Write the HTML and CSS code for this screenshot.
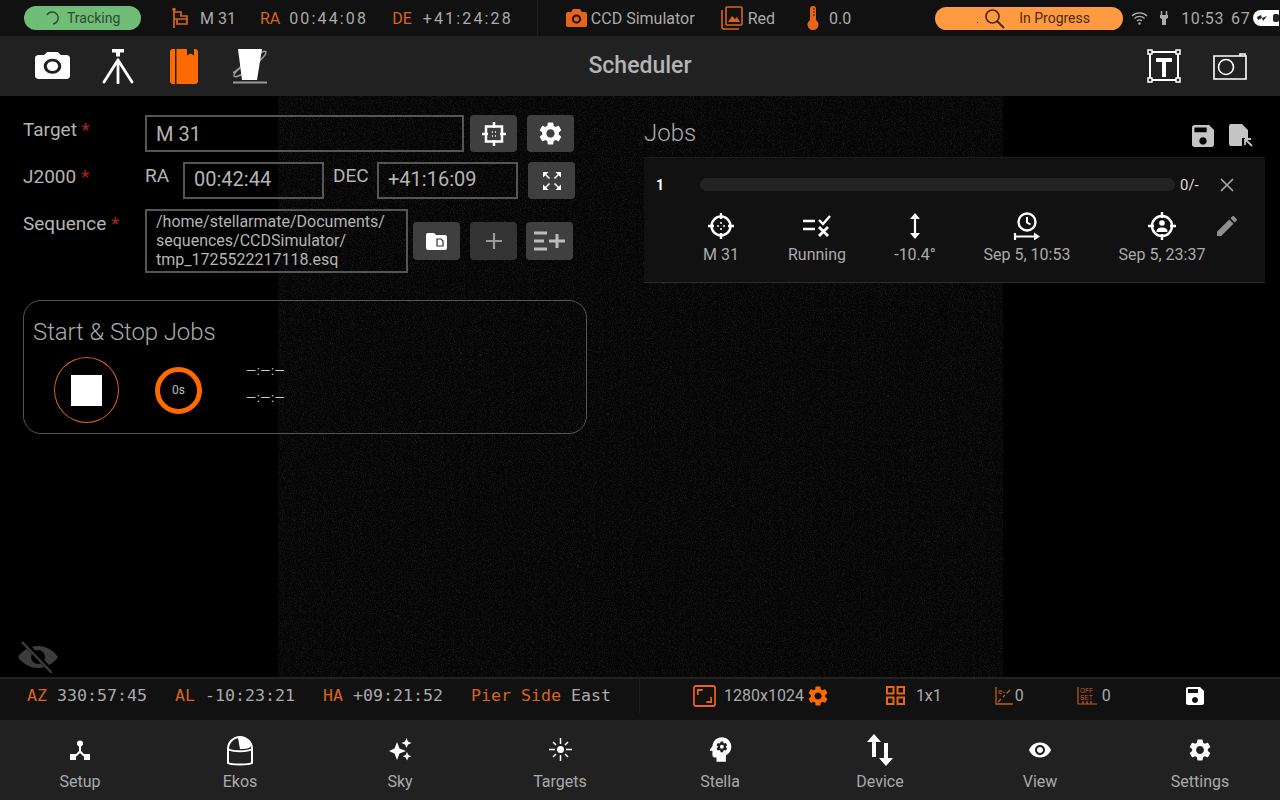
FILE: index.html
```html
<!DOCTYPE html>
<html lang="en">
<head>
  <meta charset="UTF-8">
  <meta name="viewport" content="width=device-width, initial-scale=1.0">
  <title>Scheduler</title>
  <link rel="stylesheet" href="styles.css">
</head>
<body>
<svg class="sprite" width="0" height="0">
  <symbol id="i-save" viewBox="3 3 18 18"><path d="M17 3H5c-1.11 0-2 .9-2 2v14c0 1.1.89 2 2 2h14c1.1 0 2-.9 2-2V7l-4-4zm-5 16c-1.66 0-3-1.34-3-3s1.34-3 3-3 3 1.34 3 3-1.34 3-3 3zm3-10H5V5h10v4z"/></symbol>
  <symbol id="i-gear" viewBox="2 2 20 20"><path d="M19.14 12.94c.04-.3.06-.61.06-.94 0-.32-.02-.64-.07-.94l2.03-1.58c.18-.14.23-.41.12-.61l-1.92-3.32c-.12-.22-.37-.29-.59-.22l-2.39.96c-.5-.38-1.03-.7-1.62-.94l-.36-2.54c-.04-.24-.24-.41-.48-.41h-3.84c-.24 0-.43.17-.47.41l-.36 2.54c-.59.24-1.13.57-1.62.94l-2.39-.96c-.22-.08-.47 0-.59.22L2.74 8.87c-.12.21-.08.47.12.61l2.03 1.58c-.05.3-.09.63-.09.94s.02.64.07.94l-2.03 1.58c-.18.14-.23.41-.12.61l1.92 3.32c.12.22.37.29.59.22l2.39-.96c.5.38 1.03.7 1.62.94l.36 2.54c.05.24.24.41.48.41h3.84c.24 0 .44-.17.47-.41l.36-2.54c.59-.24 1.13-.56 1.62-.94l2.39.96c.22.08.47 0 .59-.22l1.92-3.32c.12-.22.07-.47-.12-.61l-2.01-1.58zM12 15.6c-1.98 0-3.6-1.62-3.6-3.6s1.62-3.6 3.6-3.6 3.6 1.62 3.6 3.6-1.62 3.6-3.6 3.6z"/></symbol>
  <symbol id="i-camera" viewBox="2 2 20 18" preserveAspectRatio="none"><circle cx="12" cy="11.5" r="3.2"/><path d="M9 2L7.17 4H4c-1.1 0-2 .9-2 2v12c0 1.1.9 2 2 2h16c1.1 0 2-.9 2-2V6c0-1.1-.9-2-2-2h-3.17L15 2H9zm3 14.5c-2.76 0-5-2.24-5-5s2.24-5 5-5 5 2.24 5 5-2.24 5-5 5z"/></symbol>
</svg>

<header class="topbar">
  <div class="pill pill-green">
    <svg class="spin" width="14" height="14" viewBox="0 0 14 14"><path d="M2 4a6 6 0 1 1 6 9" fill="none" stroke="#2c4a30" stroke-width="1.4"/></svg>
    <span>Tracking</span>
  </div>
  <svg class="flag" width="16" height="22" viewBox="0 0 16 22"><path d="M2 21V3M2 5h7v4h6v8H5v-5h10M2 12h3" fill="none" stroke="#d8641c" stroke-width="1.7"/><circle cx="2" cy="2.5" r="1.8" fill="#d8641c"/></svg>
  <span class="tb-text tb-target">M 31</span>
  <span class="tb-key tb-ra">RA</span><span class="tb-val">00:44:08</span>
  <span class="tb-key tb-de">DE</span><span class="tb-val tb-val-de">+41:24:28</span>
  <div class="tb-divider"></div>
  <svg class="tb-cam" width="21" height="20" viewBox="0 0 21 20"><path d="M7 1h7l2 3h3a2 2 0 0 1 2 2v11a2 2 0 0 1-2 2H2a2 2 0 0 1-2-2V6a2 2 0 0 1 2-2h3z" fill="#e8641a"/><circle cx="10.500" cy="11" r="3.600" fill="none" stroke="#1a1008" stroke-width="2"/></svg>
  <span class="tb-text tb-ccd">CCD Simulator</span>
  <svg class="tb-img" width="22" height="24" viewBox="0 0 22 24"><path d="M1 4v17a2 2 0 0 0 2 2h15" fill="none" stroke="#d8641c" stroke-width="1.600"/><rect x="5" y="1" width="16" height="18" rx="1" fill="none" stroke="#d8641c" stroke-width="1.600"/><path d="M7 16l4-6 3 3 2-2 3 5z" fill="#d8641c"/></svg>
  <span class="tb-text tb-red">Red</span>
  <svg class="tb-thermo" width="12" height="24" viewBox="0 0 12 24"><path d="M3 3a3 3 0 0 1 6 0v11a5.500 5.500 0 1 1-6 0z" fill="#e8641a"/><path d="M6 3h2M6 6h2M6 9h2" stroke="#3a1c08" stroke-width="1"/></svg>
  <span class="tb-text tb-temp">0.0</span>
  <div class="pill pill-orange">
    <span class="pill-dot"></span>
    <svg class="search" width="21" height="21" viewBox="0 0 21 21"><circle cx="8.500" cy="8.500" r="6.500" fill="none" stroke="#4a2a0c" stroke-width="1.700"/><path d="M13 13l7 7" stroke="#4a2a0c" stroke-width="2"/></svg>
    <span>In Progress</span>
  </div>
  <svg class="tb-wifi" width="17" height="14" viewBox="0 0 17 14"><path d="M1 5a10.500 10.500 0 0 1 15 0M3.500 7.500a7 7 0 0 1 10 0M6 10a3.500 3.500 0 0 1 5 0" fill="none" stroke="#b0b0b0" stroke-width="1.200"/><circle cx="8.500" cy="12.500" r="1.200" fill="#b0b0b0"/></svg>
  <svg class="tb-plug" width="8" height="14" viewBox="0 0 8 14"><path d="M1.500 0v4M6.500 0v4" stroke="#aaa" stroke-width="1.500"/><path d="M0 4h8v3L6 8v6H2V8L0 7z" fill="#aaa"/></svg>
  <span class="tb-text tb-time">10:53</span>
  <span class="tb-text tb-batt">67</span>
  <svg class="tb-battery" width="26" height="16" viewBox="0 0 26 16"><rect width="34" height="16" rx="8" fill="#fff"/><path d="M4 7l4-2 1 3 5-2-4 5-1-3-4 2z" fill="#222"/><rect x="20" y="4" width="6" height="8" rx="2" fill="#222"/></svg>
</header>

<div class="toolbar">
  <div class="tool-left">
    <div class="tool tool-cam"><svg width="35" height="27" fill="#fff"><use href="#i-camera"/></svg></div>
    <div class="tool">
      <svg width="32" height="35" viewBox="0 0 32 35"><path d="M10 0h12v3.500h-4v4h-4v-4h-4z" fill="#fff"/><path d="M16 11v23M16 11L2 33M16 11l14 22" fill="none" stroke="#fff" stroke-width="2.800" stroke-linecap="round"/></svg>
    </div>
    <div class="tool">
      <svg width="28" height="35" viewBox="0 0 28 35"><path d="M6.500 0H17v6.500l3.500-2 3.500 2V0h1a3 3 0 0 1 3 3v29a3 3 0 0 1-3 3H6.500z" fill="#ff6a00"/><path d="M5 0H3a3 3 0 0 0-3 3v29a3 3 0 0 0 3 3h2z" fill="#ff6a00"/></svg>
    </div>
    <div class="tool">
      <svg width="34" height="35" viewBox="0 0 34 35"><ellipse cx="17" cy="15" rx="20" ry="4" transform="rotate(-38 17 15)" fill="none" stroke="#999" stroke-width="1.600"/><path d="M5 0h24l-5 31H9z" fill="#fff"/><path d="M0 24L7 19" stroke="#999" stroke-width="1.600"/><path d="M0 33.500h34" stroke="#999" stroke-width="2"/></svg>
    </div>
  </div>
  <div class="tool-title">Scheduler</div>
  <div class="tool-right">
    <svg width="34" height="34" viewBox="0 0 34 34"><rect x="3" y="3" width="28" height="28" fill="none" stroke="#fff" stroke-width="2"/><g fill="#222" stroke="#fff" stroke-width="1.500"><rect x="1" y="1" width="4" height="4"/><rect x="29" y="1" width="4" height="4"/><rect x="1" y="29" width="4" height="4"/><rect x="29" y="29" width="4" height="4"/></g><path d="M9 9h16v4h-6v15h-4V13H9z" fill="#fff"/></svg>
    <svg width="34" height="28" viewBox="0 0 34 28"><path d="M1 4h32v23H1zM27 4V2h5v2" fill="none" stroke="#fff" stroke-width="1.600"/><circle cx="13" cy="15" r="7.500" fill="none" stroke="#fff" stroke-width="1.600"/></svg>
  </div>
</div>

<main class="main">
  <svg class="noise" width="725" height="581">
    <filter id="grain" color-interpolation-filters="sRGB"><feTurbulence type="fractalNoise" baseFrequency="1.1" numOctaves="2" seed="4"/><feColorMatrix values="0 0 0 0 0.14  0 0 0 0 0.14  0 0 0 0 0.14  1.8 0 0 0 -0.78"/></filter>
    <rect width="725" height="581" fill="#040404"/>
    <rect width="725" height="581" filter="url(#grain)"/>
    <g fill="#3c3c3c">
      <circle cx="41" cy="216" r=".7"/><circle cx="210" cy="208" r=".7"/><circle cx="270" cy="235" r=".7"/><circle cx="183" cy="257" r=".7"/><circle cx="142" cy="326" r=".7"/><circle cx="232" cy="365" r=".7"/><circle cx="66" cy="38" r=".7"/><circle cx="330" cy="318" r=".7"/><circle cx="402" cy="76" r=".7"/><circle cx="520" cy="180" r=".7"/><circle cx="610" cy="300" r=".7"/><circle cx="455" cy="410" r=".7"/><circle cx="300" cy="470" r=".7"/><circle cx="120" cy="520" r=".7"/><circle cx="560" cy="500" r=".7"/><circle cx="660" cy="440" r=".7"/><circle cx="80" cy="430" r=".7"/><circle cx="385" cy="548" r=".7"/>
    </g>
  </svg>

  <section class="left">
    <div class="form-row">
      <label class="field-label">Target <em>*</em></label>
      <div class="input input-target">M 31</div>
      <button class="btn btn-first">
        <svg width="24" height="24" viewBox="0 0 24 24"><path d="M4 4.500h16v15H4z" fill="none" stroke="#fff" stroke-width="2.500"/><path d="M12 0v6M12 18v6M0 12h6M18 12h6" stroke="#fff" stroke-width="2.500"/><path d="M10 10h1M13 10h1M10 14h1M13 14h1" stroke="#fff" stroke-width="1.500"/></svg>
      </button>
      <button class="btn"><svg width="23" height="23" fill="#fff"><use href="#i-gear"/></svg></button>
    </div>
    <div class="form-row">
      <label class="field-label">J2000 <em>*</em></label>
      <span class="sub-label sub-ra">RA</span>
      <div class="input input-ra">00:42:44</div>
      <span class="sub-label sub-dec">DEC</span>
      <div class="input input-dec">+41:16:09</div>
      <button class="btn btn-expand">
        <svg width="18" height="18" viewBox="0 0 18 18"><g fill="#fff"><path d="M0 0h5.500L0 5.500zM18 0v5.500L12.500 0zM0 18v-5.500L5.500 18zM18 18h-5.500L18 12.500z"/></g><path d="M2.500 2.500l4 4M15.500 2.500l-4 4M2.500 15.500l4-4M15.500 15.500l-4-4" stroke="#fff" stroke-width="1.600"/></svg>
      </button>
    </div>
    <div class="form-row form-row-last">
      <label class="field-label">Sequence <em>*</em></label>
      <div class="input input-seq">/home/stellarmate/Documents/<br>sequences/CCDSimulator/<br>tmp_1725522217118.esq</div>
      <div class="seq-btns">
        <button class="btn">
          <svg width="21" height="17" viewBox="0 0 21 17"><path d="M0 2a2 2 0 0 1 2-2h6l2 2h9a2 2 0 0 1 2 2v11a2 2 0 0 1-2 2H2a2 2 0 0 1-2-2z" fill="#fff"/><path d="M11 6h4l2 2v5h-6z" fill="none" stroke="#333" stroke-width="1.200"/></svg>
        </button>
        <button class="btn btn-dim">
          <svg width="18" height="18" viewBox="0 0 18 18"><path d="M9 1v16M1 9h16" stroke="#999" stroke-width="2.200"/></svg>
        </button>
        <button class="btn">
          <svg width="31" height="20" viewBox="0 0 31 20"><path d="M0 2h13M0 10h10M0 18h13" stroke="#bbb" stroke-width="3"/><path d="M23 3v14M15 10h16" stroke="#bbb" stroke-width="3"/></svg>
        </button>
      </div>
    </div>

    <div class="panel">
      <h3 class="panel-title">Start &amp; Stop Jobs</h3>
      <div class="panel-body">
        <button class="stop-btn"><span class="stop-square"></span></button>
        <div class="ring">0s</div>
        <div class="times">
          <span>—:—:—</span>
          <span>—:—:—</span>
        </div>
      </div>
    </div>
  </section>

  <section class="right">
    <div class="jobs-head">
      <h2 class="jobs-title">Jobs</h2>
      <svg class="jobs-save" width="22" height="22" fill="#c4c4c4"><use href="#i-save"/></svg>
      <svg class="jobs-file" width="24" height="23" viewBox="0 0 24 23"><path d="M2 0h11l6 6v8h-6v8H2a2 2 0 0 1-2-2V2a2 2 0 0 1 2-2z" fill="#c4c4c4"/><path d="M16 15h6M16 15v6M17 16l6 6" stroke="#c4c4c4" stroke-width="1.800" fill="none"/></svg>
    </div>
    <div class="job-card">
      <div class="job-top">
        <span class="job-num">1</span>
        <div class="job-progress"></div>
        <span class="job-count">0/-</span>
        <svg class="job-close" width="14" height="14" viewBox="0 0 14 14"><path d="M1 1l12 12M13 1L1 13" stroke="#aaa" stroke-width="1.600"/></svg>
      </div>
      <div class="job-info">
        <div class="job-cell">
          <svg width="28" height="28" viewBox="0 0 28 28"><circle cx="14" cy="14" r="9.500" fill="none" stroke="#fff" stroke-width="2.400"/><path d="M14 1v6M14 21v6M1 14h6M21 14h6" stroke="#fff" stroke-width="2.400"/><path d="M13 11h2M13 17h2M11 13v2M17 13v2" stroke="#fff" stroke-width="1.400"/></svg>
          <span>M 31</span>
        </div>
        <div class="job-cell">
          <svg width="28" height="28" viewBox="0 0 28 28"><path d="M0 9h12M0 17h12" stroke="#fff" stroke-width="2.400"/><path d="M16 8l4 4 7-8" fill="none" stroke="#fff" stroke-width="2.400"/><path d="M16 15l9 9M25 15l-9 9" stroke="#fff" stroke-width="2.800"/></svg>
          <span>Running</span>
        </div>
        <div class="job-cell">
          <svg width="28" height="28" viewBox="0 0 28 28"><path d="M14 4v20" stroke="#fff" stroke-width="2.200"/><path d="M9 7l5-6 5 6zM9 21l5 6 5-6z" fill="#fff"/></svg>
          <span>-10.4°</span>
        </div>
        <div class="job-cell">
          <svg width="28" height="28" viewBox="0 0 28 28"><circle cx="14" cy="10" r="8.500" fill="none" stroke="#fff" stroke-width="2.400"/><path d="M14 5v5.500l3.500 2" fill="none" stroke="#fff" stroke-width="2"/><path d="M2 21v7M2 24.500h20" stroke="#fff" stroke-width="2.200"/><path d="M21 20.500l6 4-6 4z" fill="#fff"/></svg>
          <span>Sep 5, 10:53</span>
        </div>
        <div class="job-cell">
          <svg width="28" height="28" viewBox="0 0 28 28"><circle cx="14" cy="14" r="10" fill="none" stroke="#fff" stroke-width="2.400"/><path d="M14 0v6M14 22v6M0 14h6M22 14h6" stroke="#fff" stroke-width="2.400"/><circle cx="14" cy="11" r="2.800" fill="#fff"/><path d="M8.500 20c0-3.500 2.500-4.500 5.500-4.500s5.500 1 5.500 4.500z" fill="#fff"/></svg>
          <span>Sep 5, 23:37</span>
        </div>
        <svg class="job-edit" width="20" height="20" viewBox="3 3 18 18" fill="#8f8f8f"><path d="M3 17.250V21h3.750L17.810 9.940l-3.750-3.750L3 17.250zM20.710 7.040c.39-.39.39-1.020 0-1.410l-2.340-2.340c-.39-.39-1.020-.39-1.410 0l-1.830 1.830 3.750 3.750 1.830-1.830z"/></svg>
      </div>
    </div>
  </section>

  <svg class="eye-off" width="40" height="32" viewBox="0 0 40 32"><path d="M20 5C11 5 4 10 0 16c4 6 11 11 20 11s16-5 20-11c-4-6-11-11-20-11zm0 18a7 7 0 1 1 0-14 7 7 0 0 1 0 14z" fill="#3c3c3c"/><path d="M5 0l30 32" stroke="#000" stroke-width="5"/><path d="M4 1l30 31" stroke="#3c3c3c" stroke-width="2.500"/></svg>
</main>

<div class="statusbar">
  <div class="status-left">
    <span class="st-item st-az"><b>AZ</b> 330:57:45</span>
    <span class="st-item st-al"><b>AL</b> -10:23:21</span>
    <span class="st-item st-ha"><b>HA</b> +09:21:52</span>
    <span class="st-item"><b>Pier Side</b> East</span>
  </div>
  <div class="status-right">
    <svg class="st-frame" width="23" height="22" viewBox="0 0 24 22" preserveAspectRatio="none"><rect x="1" y="1" width="22" height="20" rx="2" fill="none" stroke="#e8641a" stroke-width="1.800"/><path d="M5 10V5h5M19 12v5h-5" fill="none" stroke="#e8641a" stroke-width="1.800"/></svg>
    <span class="st-size">1280x1024</span>
    <svg class="st-gear" width="20" height="20" fill="#ff6a00"><use href="#i-gear"/></svg>
    <svg class="st-grid" width="19" height="19" viewBox="0 0 19 19"><g fill="none" stroke="#e8641a" stroke-width="2"><rect x="1" y="1" width="6.500" height="6.500"/><rect x="11.500" y="1" width="6.500" height="6.500"/><rect x="1" y="11.500" width="6.500" height="6.500"/><rect x="11.500" y="11.500" width="6.500" height="6.500"/></g></svg>
    <span class="st-bin">1x1</span>
    <svg class="st-gain" width="18" height="18" viewBox="0 0 18 18"><path d="M1 0v17h17" fill="none" stroke="#c45c18" stroke-width="1.300"/><path d="M3 15l3-3M8 10l2-2M11.500 6.500L15 3" stroke="#c45c18" stroke-width="1.300"/><text class="icon-text" x="3" y="7">e-</text></svg>
    <span class="st-zero st-zero-a">0</span>
    <svg class="st-offset" width="20" height="18" viewBox="0 0 20 18"><path d="M1 0v17h19M6 14v3M10 14v3M14 14v3" fill="none" stroke="#c45c18" stroke-width="1.200"/><text class="icon-text icon-text-sm" x="3" y="6">OFF</text><text class="icon-text icon-text-sm" x="3" y="13">SET</text></svg>
    <span class="st-zero st-zero-b">0</span>
    <svg class="st-save" width="18" height="18" fill="#fff"><use href="#i-save"/></svg>
  </div>
</div>

<nav class="navbar">
  <a class="nav-item">
    <svg width="20" height="20" viewBox="0 0 20 20" fill="#fff"><circle cx="10" cy="3.500" r="3"/><path d="M9 5h2v6l4 4-1.400 1.400L10 13l-3.600 3.400L5 15l4-4z"/><rect x="0" y="14" width="6" height="6"/><rect x="14" y="14" width="6" height="6"/></svg>
    <span>Setup</span>
  </a>
  <a class="nav-item">
    <svg width="28" height="32" viewBox="0 0 28 32"><path d="M2 15a12 12 0 0 1 24 0v14c-3 2-21 2-24 0z" fill="none" stroke="#fff" stroke-width="2"/><path d="M2 15c4 3 20 3 24 0" fill="none" stroke="#fff" stroke-width="2"/><path d="M12 4c5-2 10 0 13 8-2 3-6 3-11 3z" fill="#fff"/></svg>
    <span>Ekos</span>
  </a>
  <a class="nav-item">
    <svg width="23" height="23" viewBox="0 0 23 23" fill="#fff"><path d="M8 4l2.500 6.500L17 13l-6.500 2.500L8 22l-2.500-6.500L0 13l5.500-2.500z"/><path d="M17.500 0l1.500 3.500 3.500 1.500-3.500 1.500-1.500 3.500-1.500-3.500L12.500 5l3.500-1.500zM18 14l1.300 3 3 1.300-3 1.300-1.300 3-1.300-3-3-1.300 3-1.300z"/></svg>
    <span>Sky</span>
  </a>
  <a class="nav-item">
    <svg width="23" height="23" viewBox="0 0 23 23"><circle cx="11.500" cy="11.500" r="3.500" fill="#fff"/><path d="M11.500 0v6M11.500 17v6M0 11.500h6M17 11.500h6M4 4l3 3M16 16l3 3M19 4l-3 3M7 16l-3 3" stroke="#fff" stroke-width="1.500"/></svg>
    <span>Targets</span>
  </a>
  <a class="nav-item">
    <svg class="nav-stella" width="27" height="27" viewBox="3 2 18 20" fill="#fff"><circle cx="13" cy="10" r="1.430"/><path fill-rule="evenodd" d="M13 3C9.250 3 6.200 5.940 6.020 9.640L4.100 12.200c-.25.33-.01.8.4.8H6v3c0 1.100.9 2 2 2h1v3h7v-4.680c2.360-1.120 4-3.530 4-6.320 0-3.870-3.130-7-7-7zm3 7c0 .13-.01.26-.02.39l.83.66c.08.06.1.16.05.25l-.8 1.390c-.05.09-.16.12-.24.09l-.99-.4c-.21.16-.43.29-.67.39L14 13.830c-.01.1-.1.17-.2.17h-1.600c-.1 0-.18-.07-.2-.17l-.15-1.060c-.25-.1-.47-.23-.68-.39l-.99.4c-.09.03-.2 0-.25-.09l-.8-1.390c-.05-.08-.03-.19.05-.25l.84-.66c-.01-.13-.02-.26-.02-.39s.02-.27.04-.39l-.85-.66c-.08-.06-.1-.16-.05-.26l.8-1.380c.05-.09.15-.12.24-.09l1 .4c.2-.15.43-.29.67-.39L12 6.170c.02-.1.1-.17.2-.17h1.600c.1 0 .18.07.2.17l.15 1.060c.24.1.46.23.67.39l1-.4c.09-.03.2 0 .24.09l.8 1.380c.05.09.03.2-.05.26l-.85.66c.03.12.04.25.04.39z"/></svg>
    <span>Stella</span>
  </a>
  <a class="nav-item">
    <svg width="26" height="32" viewBox="0 0 26 32" fill="#fff"><path d="M7 0l7 8H9v15H5V8H0zM19 32l7-8h-5V9h-4v15h-5z"/></svg>
    <span>Device</span>
  </a>
  <a class="nav-item">
    <svg width="24" height="24" viewBox="0 0 24 24" fill="#fff"><path fill-rule="evenodd" d="M12 4.500C7 4.500 2.730 7.610 1 12c1.730 4.390 6 7.500 11 7.500s9.270-3.110 11-7.500c-1.730-4.390-6-7.500-11-7.500zM12 17c-2.760 0-5-2.240-5-5s2.240-5 5-5 5 2.240 5 5-2.240 5-5 5zm0-8c-1.660 0-3 1.340-3 3s1.340 3 3 3 3-1.340 3-3-1.340-3-3-3z"/></svg>
    <span>View</span>
  </a>
  <a class="nav-item">
    <svg width="22" height="22" fill="#fff"><use href="#i-gear"/></svg>
    <span>Settings</span>
  </a>
</nav>
</body>
</html>
```

FILE: styles.css
```css
* {
  box-sizing: border-box;
}
html, body {
  margin: 0;
  height: 800px;
  overflow: hidden;
}
body {
  font-family: Roboto, "Noto Sans", sans-serif;
  background-color: #000;
  color: #aaa;
  display: flex;
  flex-direction: column;
}
.sprite {
  display: none;
}
svg {
  flex: none;
  display: block;
}

/* top status strip */
.topbar {
  height: 36px;
  flex: none;
  background-color: #111;
  display: flex;
  align-items: center;
  padding-left: 24px;
  overflow: hidden;
  font-size: 16px;
}
.pill {
  display: flex;
  align-items: center;
  border-radius: 12px;
  flex: none;
}
.pill-green {
  width: 117px;
  height: 24px;
  background-color: #70bd78;
  color: #2c4a30;
  font-size: 14px;
  padding-left: 21px;
  gap: 8px;
}
.pill-orange {
  width: 188px;
  height: 23px;
  background-color: #ff9a40;
  color: #4a2a0c;
  font-size: 14px;
  margin-left: 84px;
  padding-left: 42px;
}
.pill-dot {
  width: 1px;
  height: 1px;
  background-color: #4a2a0c;
  margin-top: 8px;
}
.search {
  margin-left: 6px;
  margin-right: 14px;
}
.flag { margin-left: 31px; }
.tb-text { white-space: nowrap; }
.tb-target { margin-left: 12px; }
.tb-key { color: #d8641c; }
.tb-ra { margin-left: 24px; }
.tb-de { margin-left: 24px; }
.tb-val {
  margin-left: 9px;
  letter-spacing: 2.15px;
  white-space: nowrap;
}
.tb-val-de { margin-left: 11px; }
.tb-divider {
  width: 1px;
  height: 36px;
  background-color: #1f1f1f;
  margin-left: 24px;
}
.tb-cam { margin-left: 28px; }
.tb-ccd { margin-left: 4px; }
.tb-img { margin-left: 26px; }
.tb-red { margin-left: 5px; }
.tb-thermo { margin-left: 32px; }
.tb-temp { margin-left: 10px; }
.tb-wifi { margin-left: 8px; }
.tb-plug { margin-left: 12px; }
.tb-time { margin-left: 13px; letter-spacing: 0.6px; }
.tb-batt { margin-left: 7px; letter-spacing: 0.6px; }
.tb-battery { margin-left: 3px; }

/* module toolbar */
.toolbar {
  height: 60px;
  flex: none;
  background-color: #212121;
  display: grid;
  grid-template-columns: 1fr auto 1fr;
  align-items: center;
}
.tool-left {
  display: flex;
  padding-left: 19px;
}
.tool {
  width: 66px;
  display: flex;
  justify-content: center;
}
.tool-cam {
  padding-top: 3px;
}
.tool-title {
  font-size: 23px;
  font-weight: 500;
  color: #b4b4b4;
  margin-top: -2px;
}
.tool-right {
  display: flex;
  justify-content: flex-end;
  align-items: center;
  gap: 32px;
  padding-right: 33px;
}

/* main area */
.main {
  flex: 1;
  position: relative;
  display: flex;
  background-color: #000;
}
.noise {
  position: absolute;
  left: 278px;
  top: 0;
}
.left {
  position: relative;
  width: 587px;
  padding: 19px 0 0 23px;
}
.form-row {
  display: flex;
  align-items: flex-start;
  margin-bottom: 10px;
}
.form-row-last {
  margin-bottom: 27px;
}
.field-label {
  width: 122px;
  font-size: 19px;
  line-height: 30px;
  color: #b4b4b4;
}
.field-label em {
  color: #b02020;
  font-style: normal;
}
.sub-label {
  font-size: 19px;
  line-height: 28px;
  color: #b4b4b4;
}
.sub-ra { width: 38px; }
.sub-dec { width: 44px; margin-left: 9px; }
.input {
  border: 2px solid #555;
  color: #b4b4b4;
  font-size: 20px;
  display: flex;
  align-items: center;
  padding-left: 9px;
  height: 37px;
  padding-top: 1px;
}
.input-target { width: 319px; }
.input-ra, .input-dec {
  width: 141px;
  padding-top: 0;
  padding-bottom: 4px;
}
.input-seq {
  display: block;
  width: 263px;
  height: 64px;
  font-size: 16px;
  line-height: 19px;
  padding-top: 1px;
}
.btn {
  width: 47px;
  height: 37px;
  background-color: #3f3f3f;
  border: none;
  border-radius: 4px;
  padding: 0;
  display: flex;
  align-items: center;
  justify-content: center;
  margin-left: 10px;
}
.btn-first { margin-left: 6px; }
.btn-expand { margin-left: 10px; }
.btn-dim { background-color: #333; }
.seq-btns {
  display: flex;
  height: 64px;
  align-items: center;
  margin-left: 5px;
}
.seq-btns .btn {
  height: 38px;
  width: 47px;
}
.seq-btns .btn:first-child { margin-left: 0; }
.seq-btns .btn:last-child { margin-left: 9px; }
.panel {
  width: 564px;
  height: 134px;
  border: 1px solid #555;
  border-radius: 18px;
  padding: 18px 9px 0;
}
.panel-title {
  margin: 0;
  font-size: 24px;
  font-weight: 300;
  line-height: 26px;
  letter-spacing: -0.1px;
  color: #aaa;
}
.panel-body {
  display: flex;
  align-items: center;
  padding-left: 21px;
  margin-top: 12px;
}
.stop-btn {
  width: 65px;
  height: 66px;
  border: 1px solid #d8641c;
  border-radius: 50%;
  background: none;
  display: flex;
  align-items: center;
  justify-content: center;
  padding: 0;
}
.stop-square {
  width: 31px;
  height: 31px;
  background-color: #fff;
}
.ring {
  width: 47px;
  height: 47px;
  margin-left: 36px;
  border: 5px solid #ff6a00;
  border-radius: 50%;
  display: flex;
  align-items: center;
  justify-content: center;
  font-size: 12px;
  color: #bbb;
}
.times {
  display: flex;
  flex-direction: column;
  gap: 9px;
  margin-left: 44px;
  font-size: 13px;
  line-height: 18px;
  color: #ccc;
  letter-spacing: 0.5px;
  margin-top: -11px;
}
.right {
  position: relative;
  width: 621px;
  margin-left: 57px;
}
.jobs-head {
  height: 61px;
  display: flex;
  align-items: center;
  padding-top: 20px;
  padding-bottom: 8px;
}
.jobs-title {
  margin: 0;
  font-size: 24px;
  font-weight: 300;
  color: #aaa;
  flex: 1;
}
.jobs-save { margin-top: 6px; margin-right: 15px; }
.jobs-file { margin-top: 6px; margin-right: 12px; }
.job-card {
  height: 126px;
  background-color: #111;
  border-bottom: 1px solid #2c2c2c;
  border-top: 1px solid #1c1c1c;
}
.job-top {
  display: flex;
  align-items: center;
  height: 53px;
  padding-left: 12px;
}
.job-num {
  width: 44px;
  font-size: 14px;
  font-weight: 700;
  color: #fff;
}
.job-progress {
  width: 475px;
  height: 13px;
  border-radius: 7px;
  background-color: #222;
}
.job-count {
  margin-left: 5px;
  width: 39px;
  font-size: 15px;
  color: #ddd;
}
.job-close { margin-left: 1px; }
.job-info {
  display: grid;
  grid-template-columns: 50px 142px 54px 170px 100px 30px;
  padding-left: 52px;
  align-items: start;
  padding-top: 1px;
}
.job-cell {
  display: flex;
  flex-direction: column;
  align-items: center;
  font-size: 16px;
  color: #aaa;
  white-space: nowrap;
  gap: 5px;
}
.job-cell:nth-child(1) {
  margin: 0 -20px;
}
.job-cell:nth-child(3) {
  margin: 0 -10px;
}
.job-edit {
  justify-self: center;
  margin-top: 4px;
}
.eye-off {
  position: absolute;
  left: 18px;
  bottom: 4px;
}

/* bottom status strip */
.statusbar {
  height: 43px;
  flex: none;
  background-color: #111;
  border-top: 2px solid #222;
  display: flex;
  align-items: center;
  padding-bottom: 8px;
}
.status-left {
  width: 640px;
  height: 35px;
  border-right: 1px solid #1f1f1f;
  display: flex;
  align-items: center;
  padding-left: 27px;
  font-family: "DejaVu Sans Mono", "Liberation Mono", monospace;
  font-size: 16.6px;
  color: #aaa;
  white-space: nowrap;
}
.st-item b {
  font-weight: 400;
  color: #d8641c;
}
.st-az, .st-al, .st-ha {
  width: 148px;
}
.status-right {
  display: flex;
  align-items: center;
  padding-left: 53px;
  font-size: 16px;
}
.st-size { margin-left: 8px; }
.st-gear { margin-left: 4px; }
.st-grid { margin-left: 58px; }
.st-bin { margin-left: 11px; }
.st-gain { margin-left: 53px; }
.st-zero-a { margin-left: 2px; }
.st-offset { margin-left: 53px; }
.st-zero-b { margin-left: 5px; }
.st-save { margin-left: 75px; }
.icon-text {
  font-family: "Liberation Sans", sans-serif;
  font-size: 8px;
  fill: #c45c18;
}
.icon-text-sm {
  font-size: 6.5px;
}

/* bottom navigation */
.navbar {
  height: 80px;
  flex: none;
  background-color: #212121;
  display: grid;
  grid-template-columns: repeat(8, 1fr);
}
.nav-item {
  display: grid;
  grid-template-rows: 60px auto;
  justify-items: center;
  align-items: center;
  font-size: 16px;
  color: #aaa;
}
.nav-item span {
  margin-top: -18px;
}
.nav-item svg {
  margin-top: -1px;
  margin-bottom: 0;
}
```
